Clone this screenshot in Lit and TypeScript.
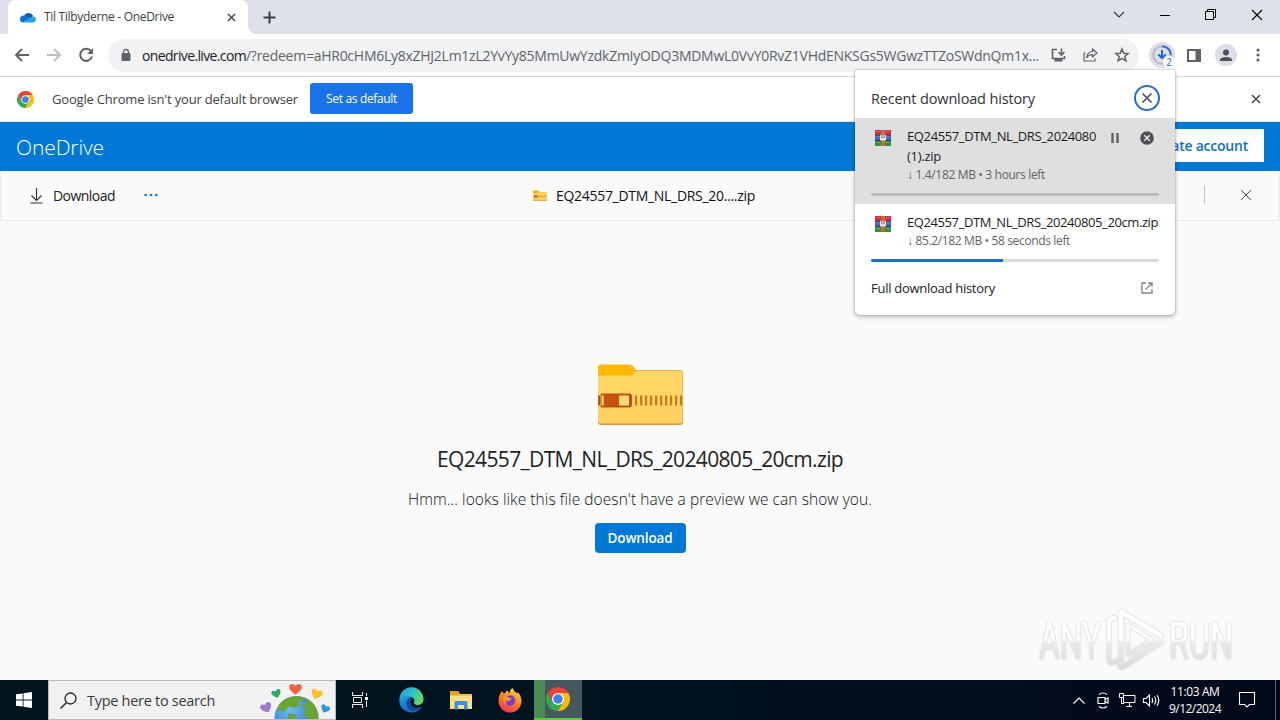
import { LitElement, html, css, svg } from "lit";
import { customElement, property } from "lit/decorators.js";

// A single line of text whose tracking is adjusted so that it fills a known width.
@customElement("fit-text")
class FitText extends LitElement {
  @property({ type: Number }) w = 0;
  @property() text = "";
  static styles = css`
    :host { display: inline-block; white-space: pre; flex: none; }
    span { display: inline-block; }
  `;
  render() {
    return html`<span>${this.text}</span>`;
  }
  updated() {
    const s = this.renderRoot.querySelector("span") as HTMLElement;
    s.style.letterSpacing = "0px";
    const natural = s.getBoundingClientRect().width;
    this.style.width = this.w + "px";
    s.style.letterSpacing = (this.w - natural) / this.text.length + "px";
  }
}

const t = (text: string, w: number, cls = "") =>
  html`<fit-text class=${cls} .text=${text} .w=${w}></fit-text>`;

const cross = (size: number, color: string, sw: number) => html`
  <svg width=${size} height=${size} viewBox="0 0 ${size} ${size}">
    <path d="M1 1L${size - 1} ${size - 1}M${size - 1} 1L1 ${size - 1}" stroke=${color} stroke-width=${sw} fill="none" />
  </svg>`;

const chromeLogo = (s: number) => html`
  <svg width=${s} height=${s} viewBox="0 0 48 48">
    <path fill="#34a853" d="M24 24L34.4 30L24 48A24 24 0 0 1 3.2 12L13.6 30Z" />
    <path fill="#ea4335" d="M3.2 12A24 24 0 0 1 44.8 12L24 13L13.6 30Z" />
    <path fill="#fbbc04" d="M24 12H44.8A24 24 0 0 1 24 48L34.4 30Z" />
    <circle cx="24" cy="24" r="12" fill="#fff" />
    <circle cx="24" cy="24" r="9.500" fill="#3f7ff0" />
  </svg>`;

const rarIcon = html`
  <svg width="16" height="16" viewBox="0 0 16 16">
    <rect width="16" height="5.4" fill="#cf2f4c" />
    <rect y="5.4" width="16" height="5.2" fill="#3f62c0" />
    <rect y="10.6" width="16" height="5.4" fill="#2a9440" />
    <path d="M0 5.2H16M0 10.6H16" stroke="#40304a" stroke-width=".9" />
    <path d="M1 1.500H5M1 7H5M1 12.500H5M11 1.500H15M11 7H15M11 12.500H15" stroke="#fff" stroke-width=".8" opacity=".3" />
    <rect x="5.800" width="4.4" height="16" fill="#c2702c" />
    <rect x="5" y="4.800" width="6" height="5.800" rx="1" fill="#f1e6d8" />
    <path d="M6.900 4.800V8.200M9.100 4.800V8.200" stroke="#6a4a3a" stroke-width=".9" />
  </svg>`;

const teeth = [...Array(10)].map((_, i) => svg`<rect x=${37 + i * 5} y="31.5" width="2.2" height="10" fill="#c87a1e" />`);
const zipFolder = html`
  <svg width="85" height="61" viewBox="0 0 85 61">
    <defs>
      <linearGradient id="zf" x1="0" y1="0" x2="0" y2="1">
        <stop offset="0" stop-color="#ffd764" /><stop offset="1" stop-color="#ffd060" />
      </linearGradient>
    </defs>
    <path d="M3 6H82Q85 6 85 9V58Q85 61 82 61H3Q0 61 0 58V6Z" fill="#d9973a" />
    <path d="M0 8H36L40 6.5H82Q84.5 6.5 84.5 9V57.5Q84.5 59.5 82 59.5H3Q0 59.5 0 57Z" fill="url(#zf)" />
    <path d="M3 .5H31Q34 .5 36 3L38 6.500Q36 10 33 11.500H0V3.500Q0 .5 3 .5Z" fill="#ffb900" />
    ${teeth}
    <rect x="0" y="31.500" width="2.200" height="10" fill="#a85a14" />
    <path d="M4 29.500H31Q34 29.500 34 32.500V40.500Q34 43.500 31 43.500H4Q2.500 43.500 2.500 42V31Q2.500 29.500 4 29.500Z" fill="#b35214" />
    <rect x="3.500" y="31.500" width="2.200" height="10" fill="#ffd772" />
    <rect x="6" y="31" width="15" height="11" fill="#c8500f" />
    <rect x="21" y="31.500" width="10" height="10" fill="#ffd772" />
  </svg>`;

const cloud = html`
  <svg width="16" height="11" viewBox="0 0 16 11">
    <path d="M4 4A5 5 0 0 1 13 3.500L10 8H2Z" fill="#0f5ead" />
    <path d="M3.800 3.500C1.600 3.500 0 5 0 7.200C0 9 1.200 10.500 3 10.500L11 6L6 3.900Z" fill="#1272c8" />
    <path d="M12.600 4.200C14.600 4.200 16 5.600 16 7.300C16 9.200 14.700 10.500 13 10.500H3L9.500 6Z" fill="#2aa3e8" />
  </svg>`;

const globe = html`
  <svg width="70" height="37" viewBox="0 0 70 37">
    <defs>
      <radialGradient id="gl" cx=".35" cy=".3" r=".8">
        <stop offset="0" stop-color="#6fbcf2" /><stop offset="1" stop-color="#1d5fc4" />
      </radialGradient>
      <path id="heart" d="M0 5C-3 2.500-6 .5-6-2.200C-6-5.500-2-6.500 0-3.200C2-6.500 6-5.500 6-2.200C6 .5 3 2.500 0 5Z" />
      <clipPath id="gc"><circle cx="35.500" cy="36" r="22" /></clipPath>
    </defs>
    <circle cx="35.500" cy="36" r="22" fill="url(#gl)" />
    <g clip-path="url(#gc)" fill="#6aa52f">
      <path d="M18 21Q26 13 37 14L44 15L41 19L36 20L39 23L33 26L28 24L24 29L17 29Z" />
      <path d="M44 15Q55 19 59 33L57 37H48L42 32L45 27L40 24L46 21Z" />
      <path d="M27 31L36 33L33 37H27Z" />
    </g>
    <use href="#heart" transform="translate(34.500 7.500) scale(1.050)" fill="#f2603e" />
    <use href="#heart" transform="translate(15.500 12) rotate(-18) scale(.8)" fill="#2fa866" />
    <use href="#heart" transform="translate(55.500 12.500) rotate(18) scale(.95)" fill="#f8c22c" />
    <use href="#heart" transform="translate(5.500 26) rotate(-25) scale(.95)" fill="#a07ad6" />
    <use href="#heart" transform="translate(64 27) rotate(25) scale(.75)" fill="#3295e0" />
  </svg>`;

@customElement("app-root")
class AppRoot extends LitElement {
  static styles = css`
    :host {
      display: block; position: relative; width: 1280px; height: 720px; overflow: hidden;
      font-family: "Open Sans", "Noto Sans", sans-serif; font-size: 14px; background: #fafafa; color: #202124;
    }
    * { box-sizing: border-box; }
    svg { display: block; flex: none; overflow: visible; }
    .screen { display: flex; flex-direction: column; height: 720px; }
    .row { display: flex; align-items: center; }
    .grow { flex: 1; }

    .tabs { height: 34px; background: #dee1e8; padding-left: 8px; display: flex; }
    .tab { width: 240px; height: 34px; background: #fff; border-radius: 7px 7px 0 0; padding: 0 12px; font-size: 12px; color: #3c4043; }
    .tab svg:first-child { margin-right: 8px; }
    .tab fit-text { margin-top: -1px; }
    .foot { width: 8px; align-self: flex-end; height: 8px; background: radial-gradient(circle at 100% 0, transparent 7.5px, #fff 8px); }
    .plus { margin-left: 7px; }
    .win { padding: 0 17px 5px 0; }
    .win svg + svg { margin-left: 35px; }

    .toolbar { height: 42px; background: #fff; padding: 0 14px; }
    .nav { margin-left: 16px; }
    .omni { height: 33px; margin-left: 14px; width: 1031px; border-radius: 17px; background: #f0f2f4; padding: 0 10px 0 13px; }
    .host { color: #202124; margin-left: 11px; }
    .path { color: #5f6368; }
    .act { margin-left: 17px; }
    .circ { width: 26px; height: 26px; border-radius: 50%; background: #dcdfe7; display: grid; place-items: center; }
    .dl { position: relative; margin-left: 10px; }
    .badge { position: absolute; left: 14px; top: 14px; width: 12px; height: 12px; border-radius: 6px; background: #fff; color: #1967d2; font-size: 10px; line-height: 12px; text-align: center; }
    .panel { margin-left: 12px; }
    .prof { width: 22px; height: 22px; margin-left: 14px; }
    .more { margin-left: 19px; }

    .infobar { height: 46px; background: #fff; border-top: 1px solid #d9dbdf; border-bottom: 1px solid #e8e8e8; padding: 0 19px 0 17px; font-size: 13px; }
    .setdef { width: 103px; height: 31px; margin-left: 12px; margin-bottom: 2px; background: #1a73e8; color: #fff; border-radius: 3px; font-size: 12px; justify-content: center; }
    .ib { margin-left: 18px; color: #3c4043; }

    .suite { height: 49px; background: #0078d7; padding: 0 16px; color: #fff; justify-content: space-between; }
    .brand { font-size: 21px; font-weight: 300; }
    .create { height: 33px; background: #fff; color: #0f6cbd; font-weight: 600; padding: 0 16px; margin-top: -2px; }

    .cmd { height: 50px; border: 1px solid #ebebeb; border-top: 0; background: #fafafa; padding: 0 27px 1px 29px; color: #212121; }
    .cmd .lbl { margin-left: 10px; }
    .cmd .dots { margin-left: 29px; }
    .file { margin-left: 375px; gap: 9px; color: #111; }
    .sep { width: 1px; height: 18px; background: #c4c4c4; margin-right: 35px; }

    .main { flex: 1; display: flex; flex-direction: column; align-items: center; background: #fafafa; padding-top: 143px; position: relative; }
    .name { font-size: 21px; line-height: 30px; margin-top: 19px; color: #1f1f1f; }
    .hmm { font-size: 15.500px; line-height: 20px; margin-top: 15px; color: #111; font-weight: 300; }
    .btn { width: 91px; height: 30px; margin-top: 14px; border-radius: 4px; background: #0078d7; color: #fff; font-weight: 600; justify-content: center; font-size: 13.500px; }
    .mark { position: absolute; left: 1030px; top: 381px; }

    .task { height: 40px; background: linear-gradient(90deg, #02161f 0, #02141f 45%, #010c1c 75%, #010a1a); color: #fff; }
    .start { width: 48px; display: grid; place-items: center; }
    .search { width: 288px; height: 40px; background: #f1f1f1; border: 1px solid #b9bcbe; padding-left: 11px; color: #3a3a3a; font-size: 14.5px; overflow: hidden; }
    .search .lbl { margin-left: 10px; }
    .search .gl { margin-left: auto; padding-right: 4px; align-self: flex-end; }
    .app { width: 49px; height: 40px; display: grid; place-items: center; }
    .tv { width: 48px; margin-right: 3px; }
    .active { width: 48px; background: linear-gradient(90deg, #4d8a55 0 11px, #46575f 11px); border-bottom: 2px solid #4fd62c; }
    .tray { gap: 6px; }
    .cell { width: 18px; display: grid; place-items: center; }
    .clock { width: 56px; font-size: 12px; line-height: 17px; display: flex; flex-direction: column; align-items: center; margin-left: 1px; padding-bottom: 1px; }
    .note { width: 18px; margin-left: 16px; }
    .edge { width: 1px; height: 40px; background: #586070; margin: 0 4px 0 18px; }

    .pop { position: absolute; left: 855px; top: 70px; width: 320px; height: 245px; background: #fff; border-radius: 3px 3px 5px 5px; box-shadow: 0 0 2px rgba(0,0,0,.35), 0 2px 5px rgba(0,0,0,.25); overflow: hidden; font-size: 13px; }
    .ph { height: 48px; padding: 8px 15px 0 16px; justify-content: space-between; font-size: 14.500px; color: #303134; }
    .item { padding: 0 16px; display: flex; flex-direction: column; color: #1b1b1b; }
    .one { background: #dfdfdf; height: 86px; padding-top: 8px; }
    .two { height: 67px; padding-top: 8px; }
    .body { display: flex; height: 67px; }
    .two .body { height: 47px; }
    .body > svg { margin: 4px 16px 0 4px; }
    .lines { display: flex; flex-direction: column; line-height: 20px; }
    .meta { font-size: 12px; color: #5f6368; line-height: 18px; }
    .acts { margin-left: 15px; display: flex; gap: 21px; padding-top: 4px; height: 20px; align-items: center; }
    .bar { height: 3px; border-radius: 2px; background: #bcbcbc; width: 288px; }
    .two .bar { background: #d9dbde; }
    .fill { height: 3px; border-radius: 2px 0 0 2px; background: #1f6bd6; }
    .full { height: 34px; padding: 0 22px 0 16px; justify-content: space-between; color: #202124; }
  `;

  render() {
    const g = "#5f6368";
    const progress = 45.8;
    return html`
      <div class="screen">
        <div class="tabs">
          <div class="tab row">
            ${cloud}${t("Til Tilbyderne - OneDrive", 130)}
            <div class="grow"></div>${cross(9, "#4a4d51", 1.6)}
          </div>
          <div class="foot"></div>
          <div class="row plus">
            <svg width="13" height="13" viewBox="0 0 13 13"><path d="M6.500 .5V12.500M.5 6.500H12.500" stroke="#3c4043" stroke-width="2" /></svg>
          </div>
          <div class="grow"></div>
          <div class="row win">
            <svg width="12" height="12" viewBox="0 0 12 12"><path d="M1 3L6 8L11 3" stroke="#333" fill="none" stroke-width="1.100" /></svg>
            <svg width="10" height="10" viewBox="0 0 10 10"><path d="M0 5.500H10" stroke="#000" /></svg>
            <svg width="11" height="11" viewBox="0 0 11 11"><path d="M.5 2.500H8.500V10.500H.5ZM2.500 2.500V.5H10.500V8.500H8.500" stroke="#000" fill="none" /></svg>
            ${cross(12, "#000", 1.1)}
          </div>
        </div>

        <div class="toolbar row">
          <svg width="16" height="14" viewBox="0 0 16 14"><path d="M15 7H2M8 1L2 7L8 13" stroke=${g} stroke-width="1.900" fill="none" /></svg>
          <svg class="nav" width="16" height="14" viewBox="0 0 16 14"><path d="M1 7H14M8 1L14 7L8 13" stroke="#bcbec1" stroke-width="1.900" fill="none" /></svg>
          <svg class="nav" width="16" height="16" viewBox="0 0 16 16"><path d="M13 4.200A6 6 0 1 0 14 9.500" stroke=${g} stroke-width="2" fill="none" /><path d="M15 1V7H9Z" fill=${g} /></svg>
          <div class="omni row">
            <svg width="10" height="12" viewBox="0 0 10 12"><rect x=".5" y="4" width="9" height="8" rx="1" fill=${g} /><path d="M2.500 5V3A2.500 2.500 0 0 1 7.500 3V5" stroke=${g} stroke-width="1.300" fill="none" /></svg>
            ${t("onedrive.live.com", 104, "host")}${t("/?redeem=aHR0cHM6Ly8xZHJ2Lm1zL2YvYy85MmUwYzdkZmIyODQ3MDMwL0VvY0RvZ1VHdENKSGs5WGwzTTZoSWdnQm1x...", 793, "path")}
            <div class="grow"></div>
            <svg width="15" height="14" viewBox="0 0 15 14"><path d="M6 1.500H1.500V10.500H13.500V8" stroke=${g} stroke-width="1.600" fill="none" /><path d="M3.500 10H11.500V13.500H3.500Z" fill=${g} /><path d="M10.500 .5V6M7.500 4L10.500 7L13.500 4" stroke=${g} stroke-width="1.600" fill="none" /></svg>
            <svg class="act" width="15" height="14" viewBox="0 0 15 14"><path d="M2.500 5H1V13H12V10.500M9.500 1L14 5L9.500 9V6.700Q5.500 6.500 3.500 10Q4 4 9.500 3.500Z" stroke=${g} stroke-width="1.200" fill="none" /></svg>
            <svg class="act" width="14" height="14" viewBox="0 0 14 14"><path d="M7 1L8.700 5.200L13.200 5.500L9.800 8.400L10.900 12.800L7 10.400L3.100 12.800L4.200 8.400L.8 5.500L5.300 5.200Z" stroke=${g} stroke-width="1.500" fill="none" /></svg>
          </div>
          <div class="circ dl">
            <svg width="20" height="20" viewBox="0 0 20 20">
              <circle cx="10" cy="10" r="8.800" stroke="#b9b8d2" stroke-width="2" fill="none" />
              <path d="M10 1.200A8.800 8.800 0 0 1 18.800 10" stroke="#2a6fd6" stroke-width="2" fill="none" />
              <path d="M10 5V13M6.300 9.500L10 13.200L13.700 9.500" stroke="#1f66d6" stroke-width="2" fill="none" />
            </svg>
            <div class="badge">2</div>
          </div>
          <svg class="panel" width="14" height="13" viewBox="0 0 14 13"><path d="M1 1H13V12H1Z" stroke=${g} stroke-width="2" fill="none" /><rect x="8.500" y="1" width="5" height="11" fill=${g} /></svg>
          <div class="circ prof">
            <svg width="14" height="13" viewBox="0 0 14 13"><circle cx="7" cy="3.500" r="3" fill="#4b5060" /><path d="M1 12V10.500Q2 8 7 8T13 10.500V12Z" fill="#4b5060" /></svg>
          </div>
          <svg class="more" width="4" height="14" viewBox="0 0 4 14"><circle cx="2" cy="2" r="1.600" fill=${g} /><circle cx="2" cy="7" r="1.600" fill=${g} /><circle cx="2" cy="12" r="1.600" fill=${g} /></svg>
        </div>

        <div class="infobar row">
          ${chromeLogo(17)}${t("Google Chrome isn't your default browser", 246, "ib")}
          <div class="setdef row">${t("Set as default", 71)}</div>
          <div class="grow"></div>${cross(10, "#4a4d51", 1.6)}
        </div>

        <div class="suite row">
          ${t("OneDrive", 88, "brand")}
          <div class="create row">${t("Create account", 99)}</div>
        </div>

        <div class="cmd row">
          <svg width="13" height="17" viewBox="0 0 13 17"><path d="M6.500 1V13.500M1.500 8.500L6.500 13.500L11.500 8.500M.5 16H12.500" stroke="#333" fill="none" stroke-width="1.100" /></svg>
          ${t("Download", 62, "lbl")}
          <svg class="dots" width="14" height="4" viewBox="0 0 14 4"><circle cx="1.700" cy="2" r="1.300" fill="#0078d4" /><circle cx="7" cy="2" r="1.300" fill="#0078d4" /><circle cx="12.300" cy="2" r="1.300" fill="#0078d4" /></svg>
          <div class="file row">
            <svg width="14" height="11" viewBox="0 0 14 11"><path d="M0 1H5L6 2H14V10.500H0Z" fill="#ffd15a" /><path d="M0 .5H5L6.500 2L5 3H0Z" fill="#f9b314" /><path d="M1 6.500H5" stroke="#b8601a" stroke-width="2" /><path d="M6 6.500H13.500" stroke="#cf9434" stroke-width="1.500" stroke-dasharray="1 .6" /><path d="M0 10.300H14" stroke="#e0a040" /></svg>
            ${t("EQ24557_DTM_NL_DRS_20....zip", 199)}
          </div>
          <div class="grow"></div>
          <div class="sep"></div>${cross(12, "#444", 1)}
        </div>

        <div class="main">
          ${zipFolder}
          ${t("EQ24557_DTM_NL_DRS_20240805_20cm.zip", 406, "name")}
          ${t("Hmm... looks like this file doesn't have a preview we can show you.", 464, "hmm")}
          <div class="btn row">${t("Download", 65)}</div>
          <svg class="mark" width="210" height="76" viewBox="0 0 210 76">
            <defs>
              <linearGradient id="wm" gradientUnits="userSpaceOnUse" x1="0" y1="8" x2="0" y2="68">
                <stop offset="0" stop-color="#ffffff" /><stop offset=".5" stop-color="#ffffff" /><stop offset=".54" stop-color="#ebebeb" /><stop offset="1" stop-color="#dadada" />
              </linearGradient>
              <filter id="sh" filterUnits="userSpaceOnUse" x="0" y="0" width="210" height="76"><feDropShadow dx="0" dy="0" stdDeviation="1.300" flood-color="#999" flood-opacity=".55" /></filter>
            </defs>
            <g filter="url(#sh)" fill="url(#wm)" font-family="Roboto, sans-serif" font-size="52">
              <text x="9" y="57" textLength="62" lengthAdjust="spacingAndGlyphs">ANY</text>
              <text x="139" y="57" textLength="64" lengthAdjust="spacingAndGlyphs">RUN</text>
            </g>
            <g filter="url(#sh)" fill="none" stroke="url(#wm)" stroke-linejoin="round">
              <path d="M86 16L82 16Q79 17 79 20V56Q79 63 85 60L88 58" stroke-width="4" />
              <path d="M132 39L93 65Q90 66 90 62" stroke-width="5" />
              <path d="M91 60V10L132 34" stroke-width="4.500" />
              <path d="M98 52V23L122 38" stroke-width="2.500" />
              <path d="M122 38L97 54" stroke-width="3.500" />
            </g>
          </svg>
        </div>

        <div class="task row">
          <div class="start"><svg width="16" height="16" viewBox="0 0 16 16"><path d="M0 2.300L6.700 1.400V7.600H0ZM7.500 1.300L16 0V7.600H7.500ZM0 8.400H6.700V14.600L0 13.700ZM7.500 8.400H16V16L7.500 14.700Z" fill="#fff" /></svg></div>
          <div class="search row">
            <svg width="17" height="17" viewBox="0 0 17 17"><circle cx="10.500" cy="6.500" r="5.500" stroke="#222" stroke-width="1.300" fill="none" /><path d="M6.500 10.500L.5 16.500" stroke="#222" stroke-width="1.400" /></svg>
            ${t("Type here to search", 128, "lbl")}
            <div class="gl">${globe}</div>
          </div>
          <div class="app tv"><svg width="17" height="16" viewBox="0 0 17 16"><path d="M.5 0V3M10.500 0V3M0 3.500H11M1.500 5.500H9.500V10.500H1.500ZM0 12.500H11M.5 12.500V16M10.500 12.500V16M14.500 1V4M14.500 9V15" stroke="#e8eef0" fill="none" /><rect x="13" y="5" width="3" height="3" fill="#fff" /></svg></div>
          <div class="app">
            <svg width="25" height="25" viewBox="0 0 25 25">
              <defs>
                <linearGradient id="e1" x1="0" y1="0" x2="1" y2=".3"><stop offset="0" stop-color="#1e9be0" /><stop offset=".55" stop-color="#2cc0d0" /><stop offset="1" stop-color="#5ddc62" /></linearGradient>
                <linearGradient id="e2" x1="0" y1="0" x2=".3" y2="1"><stop offset="0" stop-color="#1ea2e6" /><stop offset="1" stop-color="#1464c0" /></linearGradient>
              </defs>
              <path d="M.5 11A12 12 0 0 1 24.500 11.500C24.500 15 21.500 17 18.500 17C16 17 14.500 16 15 14.800C16.500 12 14 8.500 9.500 8.500C5 8.500 1.500 10 .5 14Z" fill="url(#e1)" />
              <path d="M.5 12.500C2 8 8 6.500 12 9C8 11 8.500 17 12.500 19.500C16 21.500 20 20.500 23 18.500C20.500 23 16 25 11.500 24.500C5 24 0 19 .5 12.500Z" fill="url(#e2)" />
              <path d="M10 10C6 13 7 20 12 22C16.500 23.700 21 21.500 23 18.500C20 20 15 20.500 12.500 17C11 15 11.300 12.500 13 10.500C12 9.700 11 9.500 10 10Z" fill="#12489a" />
            </svg>
          </div>
          <div class="app">
            <svg width="22" height="19" viewBox="0 0 22 19"><path d="M0 1H8L10 3H22V17H0Z" fill="#f6c14a" /><path d="M0 0H8L10 2L8 4H0Z" fill="#e0a02e" /><path d="M0 5H22V18H0Z" fill="#fcdf86" /><path d="M4.500 18.500V11.500Q4.500 10 6 10H16Q17.500 10 17.500 11.500V18.500H14V14H8V18.500Z" fill="#3a92d8" /></svg>
          </div>
          <div class="app">
            <svg width="24" height="24" viewBox="0 0 24 24">
              <defs><linearGradient id="ff" x1=".8" y1="0" x2=".3" y2="1"><stop offset="0" stop-color="#ffe03a" /><stop offset=".45" stop-color="#ff8b1e" /><stop offset="1" stop-color="#f0305e" /></linearGradient></defs>
              <path d="M4 3Q5 5 6.500 5.500Q8 3 10 2.500Q10 4.500 11.500 5.500Q11.500 2 14.500 0Q16 4 19 5.500L19.500 4Q23.500 8 23.500 13A11.500 11.500 0 0 1 .5 13Q.5 7 4 3Z" fill="url(#ff)" />
              <circle cx="12" cy="12.500" r="5.300" fill="#7540d2" />
              <path d="M5 9Q9 7 11.500 10Q13 10 14 11Q12 11.500 11.500 13Q9 14 8.500 12Q7 15 9.500 17Q5 15 5 9Z" fill="#ff9a20" />
            </svg>
          </div>
          <div class="app active">${chromeLogo(24)}</div>
          <div class="grow"></div>
          <div class="tray row">
            <div class="cell"><svg width="12" height="7" viewBox="0 0 12 7"><path d="M.5 6.500L6 1L11.500 6.500" stroke="#fff" fill="none" stroke-width="1.200" /></svg></div>
            <div class="cell"><svg width="12" height="17" viewBox="0 0 12 17"><path d="M2 2.500Q6-.5 10 2.500M2 14.500Q6 17.500 10 14.500M1 5.500H8V11.500H1ZM8 7.500L11 6V11L8 9.500" stroke="#fff" fill="none" stroke-width="1.200" /></svg></div>
            <div class="cell"><svg width="17" height="14" viewBox="0 0 17 14"><path d="M5 2.500H16V9.500H4.500V5M10.500 10V13M7 13.500H13M.5 .5H4.500V4.500H.5ZM2.500 4.500V10.500H5" stroke="#fff" fill="none" /></svg></div>
            <div class="cell"><svg width="17" height="13" viewBox="0 0 17 13"><path d="M.5 4.500H3L6.500 1V12L3 8.500H.5ZM9 4Q10.500 6.500 9 9M11.500 2.500Q14 6.500 11.500 10.500M14 1Q17.500 6.500 14 12" stroke="#fff" fill="none" stroke-width="1.100" /></svg></div>
            <div class="clock">${t("11:03 AM", 49)}${t("9/12/2024", 52)}</div>
          </div>
          <div class="note"><svg width="16" height="16" viewBox="0 0 16 16"><path d="M.5 .5H15.500V12.500H10.500L8 15L5.500 12.500H.5Z" stroke="#fff" fill="none" stroke-width="1.100" /></svg></div>
          <div class="edge"></div>
        </div>
      </div>

      <div class="pop">
        <div class="ph row">
          ${t("Recent download history", 164)}
          <svg width="26" height="26" viewBox="0 0 26 26"><circle cx="13" cy="13" r="12" stroke="#2a6cc9" stroke-width="2" fill="none" /><path d="M8.500 8.500L17.500 17.500M17.500 8.500L8.500 17.500" stroke="#4d5156" stroke-width="1.700" /></svg>
        </div>
        <div class="item one">
          <div class="body">
            ${rarIcon}
            <div class="lines">
              ${t("EQ24557_DTM_NL_DRS_2024080", 189)}
              ${t("(1).zip", 34)}
              ${t("↓ 1.4/182 MB • 3 hours left", 138, "meta")}
            </div>
            <div class="acts">
              <svg width="8" height="10" viewBox="0 0 8 10"><path d="M1.500 0V10M6.500 0V10" stroke="#5f6368" stroke-width="2.400" /></svg>
              <svg width="14" height="14" viewBox="0 0 14 14"><circle cx="7" cy="7" r="6.800" fill="#4d5156" /><path d="M4.300 4.300L9.700 9.700M9.700 4.300L4.300 9.700" stroke="#e3e3e3" stroke-width="1.600" /></svg>
            </div>
          </div>
          <div class="bar"></div>
        </div>
        <div class="item two">
          <div class="body">
            ${rarIcon}
            <div class="lines">
              ${t("EQ24557_DTM_NL_DRS_20240805_20cm.zip", 251)}
              ${t("↓ 85.2/182 MB • 58 seconds left", 163, "meta")}
            </div>
          </div>
          <div class="bar"><div class="fill" style="width:${progress}%"></div></div>
        </div>
        <div class="full row">
          ${t("Full download history", 124)}
          <svg width="12" height="12" viewBox="0 0 12 12"><path d="M5 1H1V11H11V7M7 1H11V5M11 1L4.500 7.500" stroke="#80868b" stroke-width="1.300" fill="none" /></svg>
        </div>
      </div>
    `;
  }
}
